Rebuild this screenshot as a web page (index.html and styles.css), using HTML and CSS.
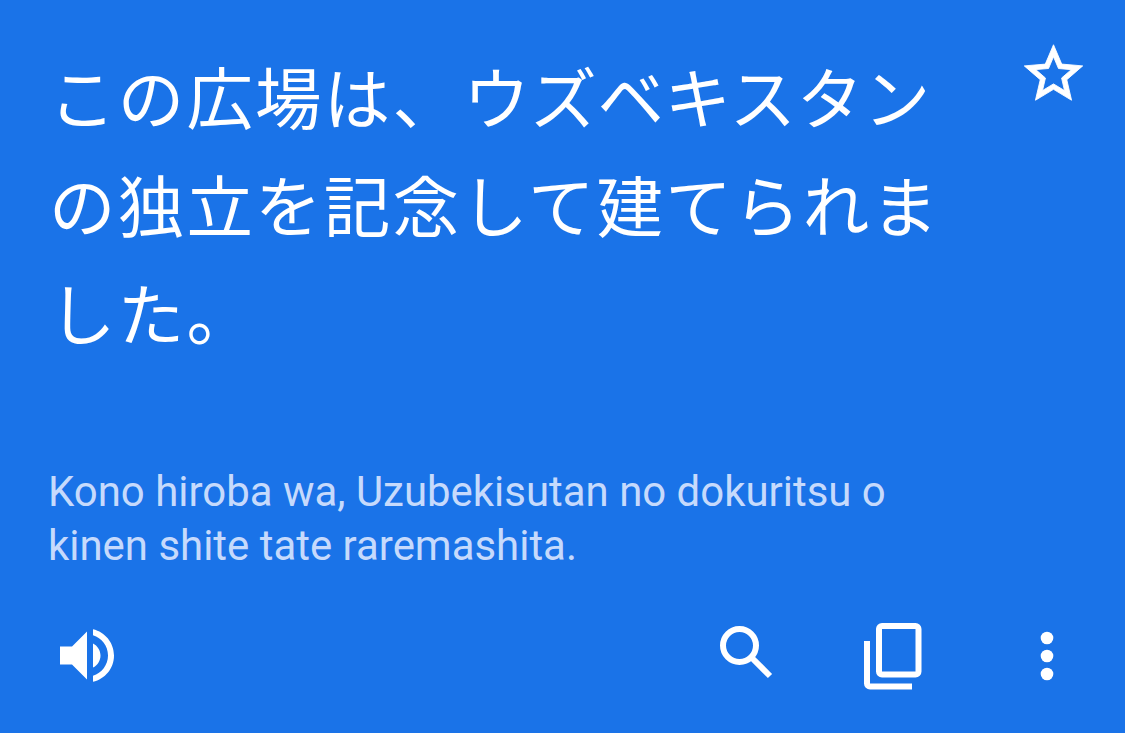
FILE: index.html
```html
<!DOCTYPE html>
<html lang="ja">
<head>
    <meta charset="UTF-8">
    <meta name="viewport" content="width=device-width, initial-scale=1.0">
    <title>Translation</title>
    <link rel="stylesheet" href="styles.css">
</head>
<body>
    <main class="card">
        <div class="card-top">
            <p class="translation">この広場は、<span class="katakana">ウズベキスタン</span><br>の独立を記念して建てられま<br>した。</p>
            <button class="icon-button star" aria-label="Save">
                <svg viewBox="1.9 1.8 20.2 19.4"><path d="M22 9.24l-7.19-.62L12 2 9.19 8.63 2 9.24l5.46 4.73L5.82 21 12 17.27 18.18 21l-1.63-7.03L22 9.24zM12 15.4l-3.76 2.27 1-4.28-3.32-2.88 4.38-.38L12 6.1l1.71 4.04 4.38.38-3.32 2.88 1 4.28L12 15.4z"/></svg>
            </button>
        </div>
        <p class="romaji" lang="ja-Latn">Kono hiroba wa, Uzubekisutan no dokuritsu o<br>kinen shite tate raremashita.</p>
        <div class="toolbar">
            <button class="icon-button speaker" aria-label="Listen">
                <svg viewBox="3 3.23 18 17.54"><path d="M3 9v6h4l5 5V4L7 9H3zm13.5 3c0-1.77-1.02-3.29-2.5-4.03v8.05c1.48-.73 2.5-2.25 2.5-4.02zM14 3.23v2.06c2.89.86 5 3.54 5 6.71s-2.11 5.85-5 6.71v2.06c4.01-.91 7-4.49 7-8.77s-2.99-7.86-7-8.77z"/></svg>
            </button>
            <div class="actions">
                <button class="icon-button search" aria-label="Search">
                    <svg viewBox="0 0 53 53"><circle class="outline" cx="19.5" cy="19.5" r="16.5"/><path class="outline" d="M31 31L50 50"/></svg>
                </button>
                <button class="icon-button copy" aria-label="Copy">
                    <svg viewBox="0 0 58 67"><rect class="outline" x="15" y="3" width="39.5" height="48.5" rx="3"/><path class="outline" d="M3 18v42.5a3 3 0 0 0 3 3h42"/></svg>
                </button>
                <button class="icon-button more" aria-label="More options">
                    <svg viewBox="0 0 14 50"><circle cx="7" cy="7" r="6.3"/><circle cx="7" cy="25" r="6.3"/><circle cx="7" cy="43" r="6.3"/></svg>
                </button>
            </div>
        </div>
    </main>
</body>
</html>
```
FILE: styles.css
```css
* {
    margin: 0;
    padding: 0;
    box-sizing: border-box;
}

body {
    background: #1a73e8;
    color: white;
}

.card {
    width: 1125px;
    height: 733px;
    padding: 42px 42px 43px 48px;
    display: flex;
    flex-direction: column;
}

.card-top {
    display: flex;
    justify-content: space-between;
    align-items: flex-start;
}

.translation {
    margin-top: -1px;
    padding-left: 1px;
    font-family: 'Noto Sans CJK JP', sans-serif;
    font-size: 66.5px;
    line-height: 108px;
    letter-spacing: 2.2px;
    font-weight: 400;
    white-space: nowrap;
}

.katakana {
    margin-left: 2px;
    letter-spacing: 0.6px;
}

.romaji {
    margin-top: 100px;
    font-family: Roboto, sans-serif;
    font-size: 41.95px;
    line-height: 54px;
    color: #c6dafc;
    white-space: nowrap;
}

.toolbar {
    margin-top: auto;
    display: flex;
    justify-content: space-between;
    align-items: center;
}

.actions {
    display: flex;
    align-items: center;
}

.icon-button {
    border: none;
    background: none;
}

.icon-button svg {
    display: block;
    width: 100%;
    height: 100%;
    fill: white;
}

.icon-button .outline {
    fill: none;
    stroke: white;
    stroke-width: 6;
}

.star {
    width: 59px;
    height: 57px;
    margin-top: 2px;
}

.star path {
    stroke: white;
    stroke-width: 0.3;
}

.speaker {
    width: 54px;
    height: 53px;
    margin-left: 12px;
    margin-bottom: 2px;
}

.search {
    width: 53px;
    height: 53px;
    margin-bottom: 8px;
}

.copy {
    width: 58px;
    height: 67px;
    margin-left: 91px;
}

.more {
    width: 14px;
    height: 50px;
    margin-left: 118px;
    margin-right: 29px;
    margin-bottom: 2px;
}
```
